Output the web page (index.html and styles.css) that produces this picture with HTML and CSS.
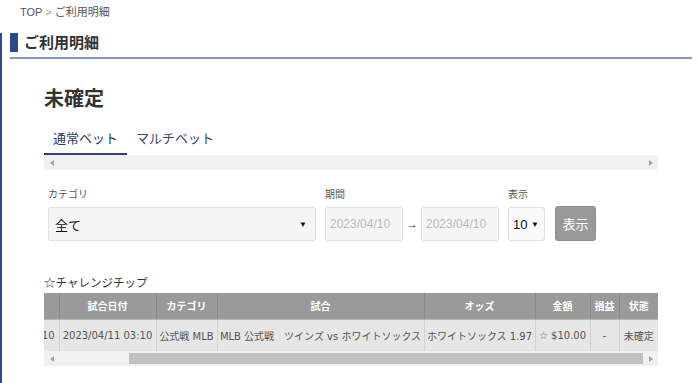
FILE: index.html
```html
<!DOCTYPE html>
<html lang="ja">
  <head>
    <meta charset="utf-8">
    <link rel="stylesheet" href="styles.css">
    <title>ご利用明細</title>
  </head>
  <body>
    <div class="crumbs">TOP <span class="sep">&gt;</span> ご利用明細</div>
    <div class="page">
      <h1 class="page-title">ご利用明細</h1>
      <div class="content">
        <h2 class="status-title">未確定</h2>
        <div class="tabs">
          <a class="tab active">通常ベット</a>
          <a class="tab">マルチベット</a>
        </div>
        <div class="hscroll">
          <span class="arrow left"></span>
          <span class="track"></span>
          <span class="arrow right"></span>
        </div>

        <form class="filter">
          <div class="field">
            <label>カテゴリ</label>
            <div class="select select-cat"><span>全て</span><span class="caret">&#9660;</span></div>
          </div>
          <div class="field">
            <label>期間</label>
            <div class="range">
              <div class="date">2023/04/10</div>
              <span class="to">&rarr;</span>
              <div class="date">2023/04/10</div>
            </div>
          </div>
          <div class="field">
            <label>表示</label>
            <div class="select select-num"><span>10</span><span class="caret">&#9660;</span></div>
          </div>
          <button type="button" class="btn-show">表示</button>
        </form>

        <p class="chip-title">☆チャレンジチップ</p>
        <div class="table-wrap" id="tableWrap">
          <table class="bets">
            <thead>
              <tr>
                <th class="col-recv">受付日時</th>
                <th class="col-date">試合日付</th>
                <th class="col-cat">カテゴリ</th>
                <th class="col-game">試合</th>
                <th class="col-odds">オッズ</th>
                <th class="col-amount">金額</th>
                <th class="col-pl">損益</th>
                <th class="col-state">状態</th>
              </tr>
            </thead>
            <tbody>
              <tr>
                <td>2023/04/10 21:10</td>
                <td>2023/04/11 03:10</td>
                <td>公式戦 MLB</td>
                <td>MLB 公式戦　ツインズ vs ホワイトソックス</td>
                <td>ホワイトソックス 1.97</td>
                <td>☆ $10.00</td>
                <td>-</td>
                <td>未確定</td>
              </tr>
            </tbody>
          </table>
        </div>
        <div class="hscroll">
          <span class="arrow left"></span>
          <span class="track"><span class="thumb"></span></span>
          <span class="arrow right"></span>
        </div>
      </div>
    </div>

    <script>
      // table is shown scrolled to the far right
      var wrap = document.getElementById('tableWrap');
      wrap.scrollLeft = wrap.scrollWidth;
    </script>
  </body>
</html>
```

FILE: styles.css
```css
/* RESETS */
*,
*::before,
*::after {
  box-sizing: border-box;
}
html,
body {
  margin: 0;
  padding: 0;
}
body {
  font-family: "Liberation Sans", "Noto Sans CJK JP", sans-serif;
  color: #333;
  background: #fff;
  overflow: hidden;
}
h1,
h2,
p {
  margin: 0;
}

/* breadcrumb */
.crumbs {
  height: 10px;
  padding: 5px 0 0 20px;
  font-size: 11px;
  line-height: 14px;
  color: #555;
}
.crumbs .sep {
  color: #999;
}

/* page frame */
.page {
  border-left: 2px solid #2b4a8a;
  min-height: calc(100vh - 10px);
}
.page-title {
  display: flex;
  align-items: center;
  gap: 6px;
  margin: 23px 6px 0 8px;
  padding-bottom: 5px;
  border-bottom: 2px solid #8199c2;
  font-size: 15px;
  line-height: 19px;
  font-weight: bold;
  color: #333;
}
.page-title::before {
  content: "";
  width: 8px;
  height: 19px;
  background: #2b4a8a;
}
.content {
  margin: 0 40px 0 42px;
}
.status-title {
  margin-top: 28px;
  font-size: 20px;
  line-height: 24px;
  font-weight: bold;
  color: #333;
}

/* tabs */
.tabs {
  display: flex;
  margin-top: 12px;
}
.tab {
  padding: 7px 9px 6px;
  font-size: 13px;
  line-height: 17px;
  color: #3a4670;
  border-bottom: 2px solid transparent;
}
.tab.active {
  color: #2e3a62;
  border-bottom-color: #2f3f70;
}

/* fake scrollbars */
.hscroll {
  display: flex;
  height: 15px;
  background: #f1f1f1;
}
.hscroll .arrow {
  width: 15px;
  display: flex;
  align-items: center;
  justify-content: center;
}
.hscroll .arrow::before {
  content: "";
  border: 3px solid transparent;
}
.hscroll .arrow.left::before {
  border-right: 4px solid #a3a3a3;
  border-left-width: 0;
}
.hscroll .arrow.right::before {
  border-left: 4px solid #a3a3a3;
  border-right-width: 0;
}
.hscroll .track {
  flex: 1;
  display: flex;
  justify-content: flex-end;
  align-items: center;
}
.hscroll .thumb {
  width: 88%;
  height: 11px;
  background: #c1c1c1;
}

/* filter form */
.filter {
  display: flex;
  align-items: flex-end;
  gap: 9px;
  margin-top: 18px;
  padding-left: 4px;
}
.field label {
  display: block;
  margin-bottom: 5px;
  font-size: 10px;
  line-height: 14px;
  color: #555;
}
.select,
.date {
  display: flex;
  align-items: center;
  height: 34px;
  background: #f5f5f5;
  border: 1px solid #e0e0e0;
  border-radius: 3px;
  font-size: 13px;
}
.select {
  justify-content: space-between;
  color: #111;
}
.select .caret {
  font-size: 8px;
  color: #111;
}
.select-cat {
  width: 268px;
  padding: 0 8px 0 6px;
}
.select-num {
  width: 37px;
  padding: 0 5px 0 4px;
  background: #fafafa;
}
.range {
  display: flex;
  align-items: center;
}
.date {
  width: 78px;
  padding: 0 4px;
  font-size: 12px;
  color: #bbb;
}
.to {
  width: 18px;
  text-align: center;
  font-size: 12px;
  color: #444;
}
.btn-show {
  height: 35px;
  width: 41px;
  margin-left: 1px;
  border: 1px solid #8f8f8f;
  border-radius: 3px;
  background: #999;
  color: #fff;
  font: inherit;
  font-size: 13px;
  cursor: pointer;
}

/* table */
.chip-title {
  margin-top: 34px;
  font-size: 11.5px;
  line-height: 16px;
  color: #333;
}
.table-wrap {
  margin-top: 2px;
  overflow: hidden;
}
.bets {
  table-layout: fixed;
  width: 697px;
  border-collapse: collapse;
  white-space: nowrap;
  font-family: "DejaVu Sans", "Noto Sans CJK JP", sans-serif;
  font-size: 10px;
}
.bets th {
  height: 26px;
  padding: 0 3px;
  background: #9a9a9a;
  color: #fff;
  font-weight: bold;
  border-left: 1px solid #8a8a8a;
  border-bottom: 1px solid #b5b5b5;
}
.bets td {
  height: 32px;
  padding: 0 2px;
  background: #e6e6e6;
  color: #555;
  text-align: center;
  border-left: 1px solid #d2d2d2;
}
.bets th:first-child,
.bets td:first-child {
  border-left: none;
}
.col-recv { width: 98px; }
.col-date { width: 97px; }
.col-cat { width: 61px; }
.col-game { width: 207px; }
.col-odds { width: 111px; }
.col-amount { width: 55px; }
.col-pl { width: 29px; }
.col-state { width: 39px; }
```
